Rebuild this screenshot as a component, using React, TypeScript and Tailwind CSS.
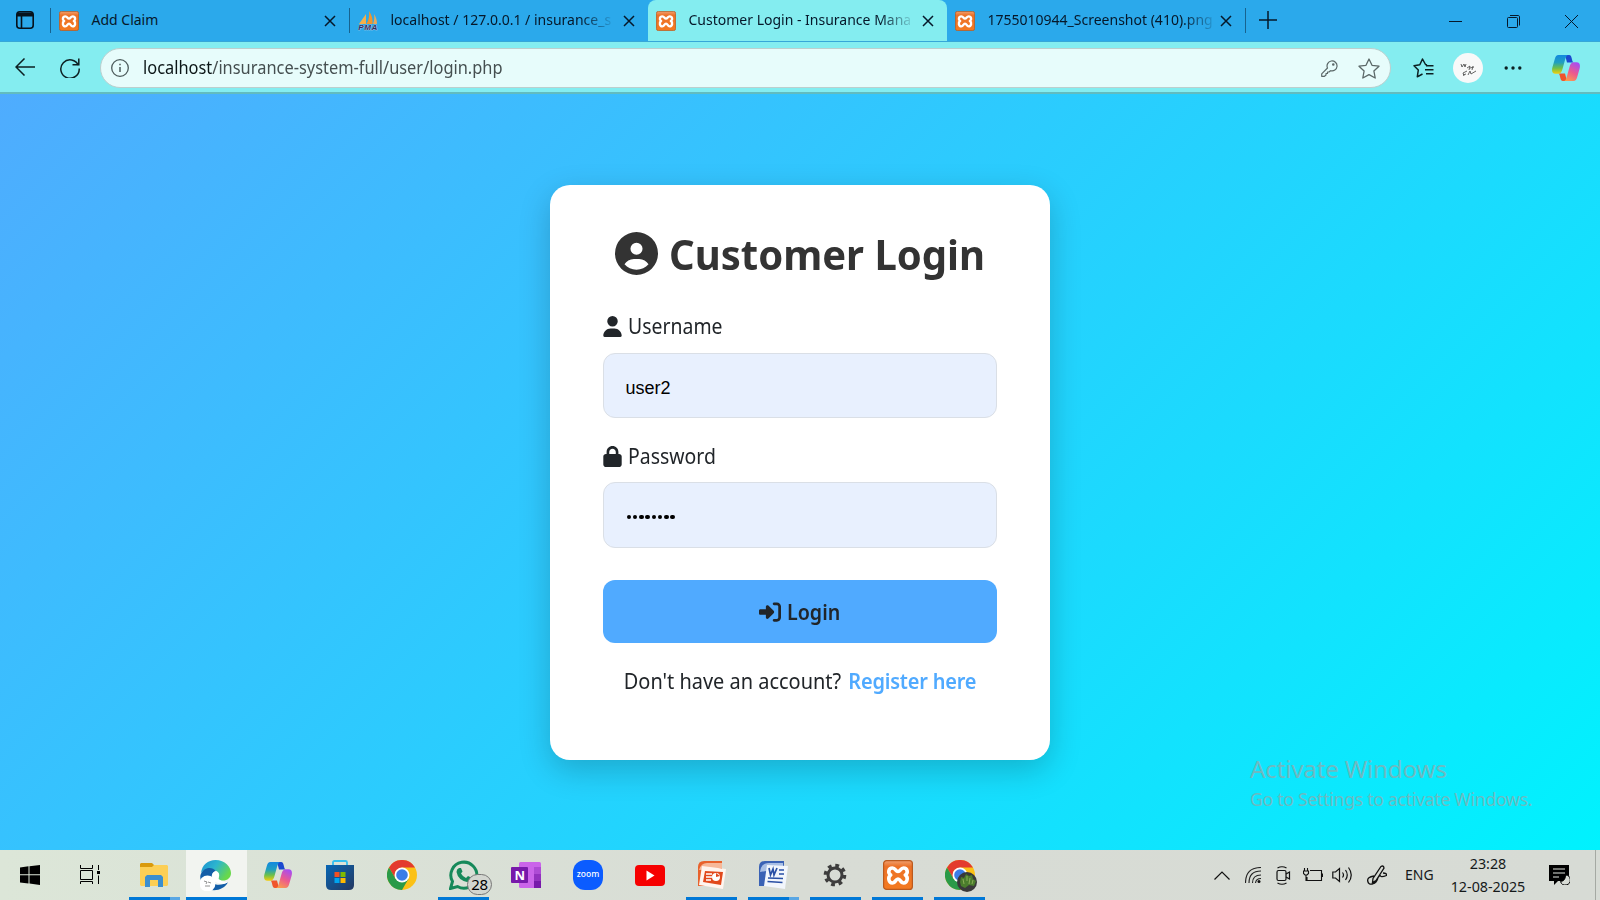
import React from 'react';
import { FaCircleUser, FaUser, FaLock, FaRightToBracket } from 'react-icons/fa6';

const Xampp = ({ className }: { className: string }) => (
  <svg viewBox="0 0 30 30" className={className}>
    <defs>
      <linearGradient id="xg" x1="0" y1="0" x2="0" y2="1">
        <stop offset="0" stopColor="#f0a070" />
        <stop offset="0.2" stopColor="#ec7228" />
        <stop offset="1" stopColor="#f47a20" />
      </linearGradient>
    </defs>
    <rect x="0.6" y="0.6" width="28.8" height="28.8" rx="3" fill="url(#xg)" stroke="#bb5a1e" strokeWidth="1.2" />
    <path
      d="M15 11.5C17.5 11.5 17.500 8 20.500 8C24.500 8 25.500 13 22.300 15C25.500 17 24.500 23 20.500 23C17.500 23 17.500 19 15 19C12.500 19 12.500 23 9.500 23C5.500 23 4.500 17 7.700 15C4.500 13 5.500 8 9.500 8C12.500 8 12.500 11.500 15 11.500Z"
      fill="none"
      stroke="#fff"
      strokeWidth="3.600"
      strokeLinejoin="round"
    />
  </svg>
);

const Pma = () => (
  <svg viewBox="0 0 20 20" className="h-5 w-5 shrink-0">
    <path d="M1 13L8 3V13Z" fill="#f5b04a" />
    <path d="M8.500 13C11 9 11.500 4 11 0C14 4 15 9 14.500 13Z" fill="#f0962c" />
    <path d="M15 13C16.500 9 16.500 6 16 3C18 6 19 9 19 13Z" fill="#e9a95a" />
    <text x="0.300" y="18.800" textLength="19" fontFamily="Liberation Sans" fontSize="8" fontWeight="bold" fontStyle="italic" fill="#2f2f66" stroke="#cfd0dc" strokeWidth="0.700" paintOrder="stroke">PMA</text>
  </svg>
);

const Close = () => (
  <svg viewBox="0 0 12 12" className="h-3 w-3 shrink-0" stroke="#06182a" strokeWidth="1.500">
    <path d="M1 1L11 11M11 1L1 11" />
  </svg>
);

const Copilot = ({ className }: { className: string }) => (
  <svg viewBox="0 0 28 26" className={className}>
    <defs>
      <linearGradient id="ca" x1="0" y1="0" x2="0" y2="1">
        <stop offset="0" stopColor="#1288e0" />
        <stop offset="0.400" stopColor="#1f9fc0" />
        <stop offset="0.700" stopColor="#6cc04a" />
        <stop offset="1" stopColor="#f3cd10" />
      </linearGradient>
      <linearGradient id="cb" x1="0.700" y1="0" x2="0.200" y2="1">
        <stop offset="0" stopColor="#a94df0" />
        <stop offset="0.500" stopColor="#ec5a8e" />
        <stop offset="1" stopColor="#fba04a" />
      </linearGradient>
    </defs>
    <path d="M13 0H17C19 0 19.500 2 20 4.500C20.500 7 21 7.500 23 7.500H15Z" fill="#1b49cf" />
    <path d="M15 26H11C9 26 8.500 24 8 21.500C7.500 19 7 18.500 5 18.500H13Z" fill="#f0542c" />
    <path d="M6.500 0H16.500C14.500 0 13.800 2 13 5L10.500 14C9.800 17 8.500 18.700 6 18.700H3.500C0 18.700-0.500 15.500 0.500 12L2.800 4C3.500 1.500 4.500 0 6.500 0Z" fill="url(#ca)" />
    <path d="M21.500 26H11.500C13.500 26 14.200 24 15 21L17.500 12C18.200 9 19.500 7.300 22 7.300H24.500C28 7.300 28.500 10.500 27.500 14L25.200 22C24.500 24.500 23.500 26 21.500 26Z" fill="url(#cb)" />
  </svg>
);

const Chrome = () => (
  <svg viewBox="0 0 30 30" className="h-[30px] w-[30px]">
    <circle cx="15" cy="15" r="15" fill="#fbc116" />
    <path d="M2 7.500A15 15 0 0 1 28 7.500H15L8.500 11L8 18Z" fill="#e33b2e" />
    <path d="M2 7.500A15 15 0 0 0 15 30L21.500 18.750L15 15L8.500 18.750Z" fill="#2a9a48" />
    <circle cx="15" cy="15" r="7.500" fill="#fff" />
    <circle cx="15" cy="15" r="5.800" fill="#3b7de8" />
  </svg>
);

const Tab = ({ icon, title, width, fade, active }: { icon: React.ReactNode; title: string; width: string; fade?: boolean; active?: boolean }) => (
  <div className={`flex h-full shrink-0 items-center pl-2 pr-[13px] ${width} ${active ? 'rounded-t-lg bg-[#84edf0]' : ''}`}>
    {icon}
    <span className={`-mt-0.5 ml-[12.500px] whitespace-nowrap text-[14px] leading-6 text-[#06182a] ${fade ? '[mask-image:linear-gradient(to_right,black_86%,transparent_102%)]' : ''}`}>{title}</span>
    <span className="ml-auto flex"><Close /></span>
  </div>
);

const Task = ({ children, bar, active, split }: { children?: React.ReactNode; bar?: boolean; active?: boolean; split?: boolean }) => (
  <div className={`relative flex h-[50px] shrink-0 items-center justify-center ${active ? 'w-[61px] bg-[#f2f4f0]' : 'w-[62px]'}`}>
    {children}
    {bar && (
      <div className={`absolute bottom-0 flex h-[3px] bg-[#0078d7] ${active ? 'inset-x-0' : 'left-[5px] right-[6px]'}`}>
        {split && <div className="ml-auto h-full w-2.5 bg-[#5aa7e4]" />}
      </div>
    )}
  </div>
);

export default function App() {
  return (
    <div className="flex h-[900px] w-[1600px] flex-col overflow-hidden font-['Noto_Sans',sans-serif]">
      <header className="flex h-[42px] shrink-0 items-center border-b border-[#37a7d8] bg-[#2ba9eb]">
        <svg viewBox="0 0 18 18" className="-mt-0.5 ml-4 h-[18px] w-[18px]" fill="none" stroke="#06121c" strokeWidth="1.600">
          <rect x="0.800" y="0.800" width="16.400" height="16.400" rx="3" />
          <path d="M1 3.500H17" strokeWidth="4" />
          <path d="M5.500 4V17" />
        </svg>
        <div className="ml-4 h-[25px] w-px bg-[#17638f]" />
        <Tab width="w-[298px]" icon={<Xampp className="h-5 w-5 shrink-0" />} title="Add Claim" />
        <div className="h-[25px] w-px bg-[#17638f]" />
        <Tab width="w-[298px]" fade icon={<Pma />} title="localhost / 127.0.0.1 / insurance_s" />
        <Tab width="w-[299px]" active fade icon={<Xampp className="h-5 w-5 shrink-0" />} title="Customer Login - Insurance Mana" />
        <Tab width="w-[298px]" fade icon={<Xampp className="h-5 w-5 shrink-0" />} title="1755010944_Screenshot (410).png" />
        <div className="h-[25px] w-px bg-[#17638f]" />
        <svg viewBox="0 0 18 18" className="-mt-0.5 ml-[13px] h-[18px] w-[18px]" stroke="#06182a" strokeWidth="1.500"><path d="M9 0V18M0 9H18" /></svg>
        <div className="ml-auto mr-[22px] mt-0.5 flex items-center gap-[45px]">
          <svg viewBox="0 0 13 13" className="h-[13px] w-[13px]" stroke="#06182a"><path d="M0 6.500H13" /></svg>
          <svg viewBox="0 0 13 13" className="h-[13px] w-[13px]" stroke="#06182a" fill="none"><rect x="0.500" y="2.500" width="10" height="10" rx="1" /><path d="M3 0.500H11C12 0.500 12.500 1 12.500 2V10.500" /></svg>
          <svg viewBox="0 0 13 13" className="h-[13px] w-[13px]" stroke="#06182a"><path d="M0 0L13 13M13 0L0 13" /></svg>
        </div>
      </header>

      <div className="flex h-[52px] shrink-0 items-center border-b-2 border-[#62bcbf] bg-[#84edf0] pt-0.5">
        <svg viewBox="0 0 20 18" className="-mt-0.5 ml-[15px] h-[18px] w-5" fill="none" stroke="#0c2022" strokeWidth="1.500"><path d="M20 9H1M9.500 0.500L1 9L9.500 17.500" /></svg>
        <svg viewBox="0 0 20 20" className="ml-[25px] h-5 w-5" fill="none" stroke="#0c2022" strokeWidth="1.500"><path d="M18.500 7.500A9.200 9.200 0 1 0 19.200 10.500M18.800 0.500V6.800H12.500" /></svg>
        <div className="ml-5 flex h-[40px] w-[1291px] items-center rounded-full border border-[#bccfce] bg-[#e7fcfb] pl-[10px] pr-[10px]">
          <svg viewBox="0 0 18 18" className="h-[18px] w-[18px]" fill="none" stroke="#4c5b5b" strokeWidth="1.300"><circle cx="9" cy="9" r="8.300" /><path d="M9 8V13M9 4.800V6.300" strokeWidth="1.500" /></svg>
          <span className="-mt-0.5 ml-[14px] inline-block origin-left scale-x-[0.882] whitespace-nowrap text-[18.600px] leading-6 text-[#454f50]"><span className="text-[#0b1516]">localhost</span>/insurance-system-full/user/login.php</span>
          <svg viewBox="0 0 17 17" className="ml-auto h-[17px] w-[17px]" fill="none" stroke="#5b6868" strokeWidth="1.200"><path d="M6.500 8A5 5 0 1 1 9.500 10.700L8 12H6.500V13.500H5V15L3.500 16.300H0.700V13.800Z" strokeLinejoin="round" /><circle cx="12.300" cy="4.500" r="0.700" /></svg>
          <svg viewBox="0 0 22 21" className="ml-5 h-[21px] w-[22px]" fill="none" stroke="#5b6868" strokeWidth="1.300" strokeLinejoin="round"><path d="M11 1L14 7.300L21 8.200L15.900 13L17.200 20L11 16.600L4.800 20L6.100 13L1 8.200L8 7.300Z" /></svg>
        </div>
        <svg viewBox="0 0 21 20" className="ml-[22px] h-5 w-[21px]" fill="none" stroke="#0c2022" strokeWidth="1.500" strokeLinejoin="round"><path d="M14 7L12.500 6.500L9.500 1L6.800 6.800L1 7.700L5.300 12L4.300 18.800L9.500 16M13 7.800H20.500M12 11.800H20.500M13 15.800H20.500" /></svg>
        <svg viewBox="0 0 30 30" className="ml-[19px] h-[30px] w-[30px]"><circle cx="15" cy="15" r="15" fill="#f8f9f9" /><path d="M8 11L9 14L11 11L12 14L13 11M14 15L17 13L16 17M17 15L21 14M20 13L19 17M10 20L14 18M10 22L13 21M10 20L11 23M15 22L17 18L18 21L23 18" fill="none" stroke="#555" strokeWidth="0.900" /></svg>
        <svg viewBox="0 0 18 4" className="ml-[21px] h-1 w-[18px]" fill="#0c2022"><circle cx="2.200" cy="2" r="1.700" /><circle cx="9" cy="2" r="1.700" /><circle cx="15.800" cy="2" r="1.700" /></svg>
        <Copilot className="ml-[30px] h-[26px] w-7" />
      </div>

      <main className="relative flex flex-1 justify-center bg-[linear-gradient(135deg,#4facfe,#00f2fe)] pt-[91px]">
        <div className="flex h-[575px] w-[500px] flex-col rounded-[20px] bg-white px-[53px] text-[21px] text-[#212529] shadow-[0_10px_32px_rgba(0,0,0,0.2)]">
          <h1 className="mt-[39px] flex h-[60px] items-center justify-center whitespace-nowrap text-[42px] font-bold leading-[60px] text-[#333]">
            <FaCircleUser className="-mt-px mr-[11px] h-[43px] w-[43px] shrink-0" />
            <span className="-mr-4 origin-left scale-x-[0.953]">Customer Login</span>
          </h1>
          <label className="mt-[27px] flex h-[30px] items-center leading-[30px]"><FaUser className="mr-1.5 h-[21px] w-[19px]" /><span className="-mt-px origin-left scale-x-[0.925]">Username</span></label>
          <div className="mt-3 flex h-[65px] items-center rounded-xl border border-[#dadfe6] bg-[#e8f0fe] px-[21.500px] pt-1.5 font-['Liberation_Sans',sans-serif] text-[18px] text-black">user2</div>
          <label className="mt-[23px] flex h-[30px] items-center leading-[30px]"><FaLock className="mr-1.5 h-[21px] w-[19px]" /><span className="-mt-px origin-left scale-x-[0.925]">Password</span></label>
          <div className="mt-[11px] flex h-[66px] items-center gap-[1.750px] rounded-xl border border-[#dadfe6] bg-[#e8f0fe] px-[22.500px] pt-1">
            {Array.from({ length: 8 }, (_, i) => <span key={i} className="h-[4.500px] w-[4.500px] rounded-full bg-black" />)}
          </div>
          <button className="mt-8 flex h-[63px] shrink-0 items-center justify-center rounded-xl bg-[#50aaff] font-semibold"><FaRightToBracket className="mr-1.5 h-[22px] w-[22px]" /><span className="-mr-[3px] mt-0.5 origin-left scale-x-[0.935]">Login</span></button>
          <p className="-mx-5 mt-[23px] scale-x-[0.950] whitespace-nowrap text-center leading-[30px]">Don't have an account? <a className="ml-0.5 font-semibold tracking-[-0.200px] text-[#50aaff]">Register here</a></p>
        </div>
        <div className="absolute left-[1250px] top-[659px] whitespace-nowrap text-[#9aa5a5]/70">
          <div className="text-[24.300px] leading-8 tracking-[-0.250px]">Activate Windows</div>
          <div className="text-[17.800px] leading-7 tracking-[-0.350px]">Go to Settings to activate Windows.</div>
        </div>
      </main>

      <footer className="flex h-[50px] shrink-0 items-center bg-[linear-gradient(to_right,#dce6d8,#d8dcd5_50%,#d7dbd5)] text-[#15191a]">
        <div className="flex w-[60px] justify-center"><svg viewBox="0 0 20 20" className="h-5 w-5" fill="#000"><path d="M0 2.500L8.500 1.300V9.300H0ZM9.500 1.200L20 0V9.300H9.500ZM0 10.200H8.500V18.400L0 17.500ZM9.500 10.200H20V20L9.500 18.600Z" /></svg></div>
        <div className="flex w-[64px] pl-5"><svg viewBox="0 0 20 20" className="h-5 w-5" fill="none" stroke="#000"><path d="M0.500 0V3.500H12.500V0M0.500 5.500H12.500V14.500H0.500ZM0.500 19V16.500H12.500V19M18.500 0V5M18.500 10.500V19" /><rect x="17.500" y="6.500" width="2" height="2" fill="#000" /></svg></div>
        <Task bar split><svg viewBox="0 0 28 24" className="-ml-0.5 h-6 w-7"><path d="M1 0H12L14 2V6H0V1Z" fill="#d99a0d" /><path d="M0 4H12L14 2H27L28 3V22L27 23H1L0 22Z" fill="#fccf55" /><path d="M5 24V14L7 12H21L23 14V24H18V17H10V24Z" fill="#3b8fd0" /></svg></Task>
        <Task bar active>
          <svg viewBox="0 0 31 31" className="-ml-0.5 h-[31px] w-[31px]"><defs><linearGradient id="eg" x1="0" y1="0" x2="1" y2="0.500"><stop offset="0" stopColor="#1c8fd0" /><stop offset="0.500" stopColor="#2cb5cf" /><stop offset="1" stopColor="#68d84b" /></linearGradient></defs><path d="M1 13C2 5 8 0 15.500 0C25 0 31 7 31 13C31 19 25 22 20 20C17 19 20 17 19 14C17 9 6 6 1 13Z" fill="url(#eg)" /><path d="M0.500 15C3 7 12 6 16 11C12 12 10 17 13 23C16 26 24 25 28 22C24 31 10 33 4 26C0 22 0 17 0.500 15Z" fill="#145ea8" /><path d="M12 15C13 10 19 10 19 15C19 18 17 19 20 20C23 22 27 22 28 22C25 25 16 24 13 20Z" fill="#fff" /><circle cx="7.500" cy="23.500" r="8" fill="#fff" /><path d="M4 21L7 22L6 24M8 22L11 23M5 26H10" stroke="#777" strokeWidth="0.800" fill="none" /></svg>
        </Task>
        <div className="flex">
          <Task><Copilot className="h-[26px] w-7" /></Task>
          <Task><svg viewBox="0 0 30 30" className="-ml-px h-[30px] w-[30px]"><defs><linearGradient id="sg" x1="0" y1="0" x2="1" y2="1"><stop stopColor="#0766b5" /><stop offset="1" stopColor="#253860" /></linearGradient></defs><path d="M8 6V2.500Q8 1 9.500 1H20.500Q22 1 22 2.500V6" fill="none" stroke="#32bff0" strokeWidth="1.800" /><path d="M1 5H29V25Q29 30 24 30H6Q1 30 1 25Z" fill="url(#sg)" /><path d="M9.500 12H14.500V17H9.500Z" fill="#f25022" /><path d="M15.500 12H20.500V17H15.500Z" fill="#7fba00" /><path d="M9.500 18H14.500V23H9.500Z" fill="#00a4ef" /><path d="M15.500 18H20.500V23H15.500Z" fill="#ffb900" /></svg></Task>
          <Task><Chrome /></Task>
          <Task bar>
            <svg viewBox="0 0 30 30" className="h-[30px] w-[30px]"><path d="M1.500 28.500L3.500 21.500A13 13 0 1 1 8.500 26.500Z" fill="none" stroke="#16895a" strokeWidth="3" /><path d="M10 8L12 8L13.500 11.500L12 13.500Q14 17 17 18L19 16L23 18Q22 22 18 22Q9 20 7.500 12Q7.500 9 10 8Z" fill="#16895a" /></svg>
            <span className="absolute left-[34px] top-[24px] flex h-[21px] w-[25px] items-center justify-center rounded-full border border-[#777] bg-[#d3d6d0] pb-px text-[15px] leading-none tracking-[-0.300px] text-black">28</span>
          </Task>
          <Task><svg viewBox="0 0 30 26" className="h-[26px] w-[30px]"><rect x="8" width="22" height="26" rx="1.500" fill="#ca64ea" /><rect x="23" y="5" width="7" height="7" fill="#ae4bd5" /><rect x="23" y="12" width="7" height="7" fill="#9332bf" /><rect x="23" y="19" width="7" height="7" fill="#7719aa" /><rect y="5" width="17" height="16" rx="1" fill="#7719aa" /><text x="3.500" y="17.500" fontFamily="Noto Sans" fontSize="13" fontWeight="bold" fill="#fff">N</text></svg></Task>
          <Task><div className="flex h-[30px] w-[30px] items-center justify-center rounded-[12px] bg-[#0b5cff] pb-0.5 text-[8.500px] font-medium leading-none text-white">zoom</div></Task>
          <Task><svg viewBox="0 0 30 21" className="h-[21px] w-[30px]"><rect width="30" height="21" rx="4" fill="#f60000" /><path d="M11.500 5.500V15.500L19.500 10.500Z" fill="#fff" /></svg></Task>
          <Task bar><svg viewBox="0 0 30 30" className="-ml-[3px] h-[30px] w-[30px]"><path d="M2 26V7Q2 1 8 1H26V26Z" fill="#e8622c" /><path d="M3 10Q5 3 11 3H26V8Z" fill="#f7b899" /><path d="M6 6L30 9L27 29L3 25Z" fill="#fff5ef" /><path d="M9 11L27 12L25 25L7 22Z" fill="#e1491c" /><path d="M10 14H16M10 17H16M10 20H15" stroke="#fff" strokeWidth="1.600" /><circle cx="20" cy="17" r="4" fill="#fff" /><path d="M20 17V13L24 16Z" fill="#e1491c" /></svg></Task>
          <Task bar split><svg viewBox="0 0 30 30" className="-ml-[3px] h-[30px] w-[30px]"><path d="M1 26V7Q1 1 7 1H26V26Z" fill="#3a62b5" /><path d="M2 12Q3 3 11 3H25V8Z" fill="#a9bfe5" /><path d="M9 5L30 6L27 29L6 26Z" fill="#f2f6fc" /><path d="M11 8L12.500 15L15 9L16 15L19 8" fill="none" stroke="#2a50a5" strokeWidth="1.700" /><path d="M21 10H26M21 14H26M10 18L25 18.500M9.500 21.500L24.500 22.500" stroke="#2a50a5" strokeWidth="1.700" /></svg></Task>
          <Task bar><svg viewBox="0 0 24 24" className="-ml-[3px] h-6 w-6" fill="none" stroke="#3d3d3d"><circle cx="12" cy="12" r="7" strokeWidth="3" /><circle cx="12" cy="12" r="9.600" strokeWidth="3.400" strokeDasharray="3.770 3.770" /></svg></Task>
          <Task bar><Xampp className="h-[30px] w-[30px]" /></Task>
          <Task bar><Chrome /><svg viewBox="0 0 20 20" className="absolute left-[28px] top-[22px] h-5 w-5"><circle cx="10" cy="10" r="10" fill="#39393a" /><path d="M3 10L4 5L7 6L9 2L12 4L15 3L16 7L19 9L17 14L12 13L8 16L4 14Z" fill="#4b7d2c" /><path d="M6 7L7 12M10 4V9M13 6L12 12M16 8L15 12" stroke="#9cba62" strokeWidth="0.800" /></svg></Task>
        </div>

        <div className="ml-auto flex h-full items-center">
          <svg viewBox="0 0 16 9" className="h-[9px] w-4" fill="none" stroke="#111" strokeWidth="1.200"><path d="M0.500 8.500L8 1L15.500 8.500" /></svg>
          <svg viewBox="0 0 16 16" className="ml-[15px] h-4 w-4" fill="none" stroke="#222" strokeWidth="1.100"><path d="M0.500 16Q0.500 0.500 16 0.500M4 16Q4 4 16 4M7.500 16Q7.500 8 16 8M10.500 16Q11 11.500 16 11.500" /><circle cx="14" cy="14.500" r="1.500" fill="#111" stroke="none" /></svg>
          <svg viewBox="0 0 15 19" className="ml-[15px] h-[19px] w-[15px]" fill="none" stroke="#111" strokeWidth="1.200"><rect x="1" y="4.500" width="9" height="10" rx="1.500" /><path d="M10 8L13.500 6V13L10 11M1.500 2Q6 -0.500 10.500 2M1.500 17Q6 19.500 10.500 17" /></svg>
          <svg viewBox="0 0 20 14" className="ml-3 h-[14px] w-5" fill="none" stroke="#111" strokeWidth="1.100"><path d="M7 2.500H18.500V12.500H4V9M18.500 6H19.500V9M1.500 0V3M4.500 0V3M0.500 3H5.500V5.500L4 7H2L0.500 5.500ZM3 7V12.500H5" /></svg>
          <svg viewBox="0 0 21 18" className="ml-[9px] h-[18px] w-[21px]" fill="none" stroke="#111" strokeWidth="1.200"><path d="M0.800 6V12H3.500L7.500 15.500V2.500L3.500 6ZM10.500 6.500Q12.500 9 10.500 11.500M13.500 4Q17 9 13.500 14M16.500 1.500Q22 9 16.500 16.500" /></svg>
          <svg viewBox="0 0 20 20" className="ml-[14px] h-5 w-5" fill="none" stroke="#111" strokeWidth="1.300"><path d="M14 1.500Q16.500 0 17 3L9 15.500L5.500 17.500L6 13.500ZM7 11Q0 12 0.700 16Q1.500 20 5.500 19Q10 17.500 11 12.500L13 10Q13 13 19.500 10.500Q20 8 16 8" /></svg>
          <span className="ml-[18px] w-[29px] whitespace-nowrap text-[14px] leading-5">ENG</span>
          <div className="ml-[16px] w-[76px] whitespace-nowrap text-center text-[14.300px] leading-[23px]">
            <div>23:28</div><div>12-08-2025</div>
          </div>
          <svg viewBox="0 0 21 20" className="ml-[23px] h-5 w-[21px]"><path d="M0 0H20V16H9L5 20V16H0Z" fill="#000" /><path d="M4 4H16M4 8H16M4 12H10" stroke="#dfe3dd" strokeWidth="1.200" /><path d="M16.500 10A5 5 0 1 1 11.500 16.500Q16.500 16 16.500 10Z" fill="#d8dcd5" stroke="#000" /></svg>
          <div className="ml-[25px] h-full w-px bg-[#a5a9a3]" />
          <div className="w-1" />
        </div>
      </footer>
    </div>
  );
}
